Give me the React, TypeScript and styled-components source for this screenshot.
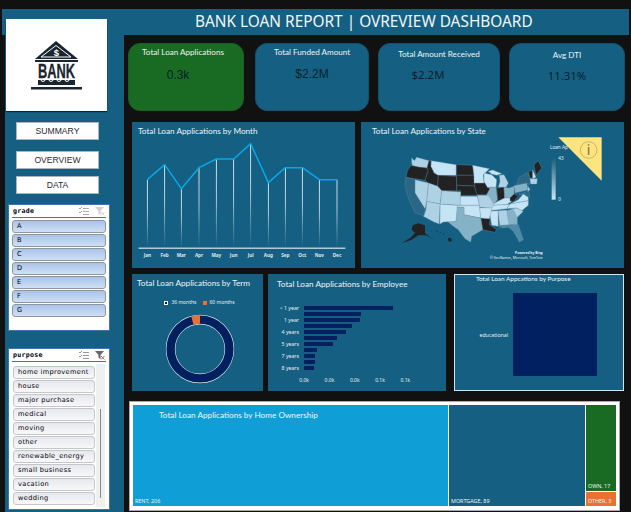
import React from "react";
import styled, { createGlobalStyle } from "styled-components";

const TEAL = "#156082";
const NAVY = "#002060";
const ORANGE = "#E97132";
const GREEN = "#196B24";
const SKY = "#0F9ED5";
const UI = '"Noto Sans", "Open Sans", sans-serif';
const TITLE = 'Lato, "Noto Sans", sans-serif';

const Global = createGlobalStyle`
  html, body { margin: 0; padding: 0; background: #111111; }
  * { box-sizing: border-box; }
`;

const Page = styled.div`
  width: 631px; height: 512px; background: #111111; padding-top: 9px;
  overflow: hidden; font-family: ${UI}; display: flex; flex-direction: column;
`;
const Header = styled.header`
  margin-left: 2px; width: 627px; height: 26px; flex: none; background: ${TEAL};
  color: #f2f6f8; font-size: 15.4px; line-height: 26px; padding-left: 193px; white-space: nowrap;
`;
const Body = styled.div`display: flex; flex: 1; min-height: 0;`;
const Sidebar = styled.aside`
  width: 119px; margin-left: 5px; background: ${TEAL}; display: flex; flex-direction: column; flex: none;
`;
const Logo = styled.div`
  position: relative; width: 101px; height: 92px; margin: -16px 0 0 1px; background: #fff;
  box-shadow: 0 1px 1px ${NAVY}; display: flex; align-items: center; justify-content: center;
`;
const LogoArt = styled.svg`overflow: visible; display: block;`;
const NavButton = styled.div<{ $top: number }>`
  width: 83px; height: 18px; margin: ${p => p.$top}px 0 0 11px; background: #fff; border: 1px solid #a9b4ba;
  color: #2b2b2b; font: 8.6px/16px "Liberation Sans", sans-serif; text-align: center;
`;
const Slicer = styled.section<{ $top: number; $h: number }>`
  width: 102px; height: ${p => p.$h}px; margin: ${p => p.$top}px 0 0 3px; background: #fff;
  border: 1px solid #3f75ad; padding: 0 3px;
`;
const SlicerHead = styled.div`
  height: 13px; border-bottom: 1px solid #4472a8; display: flex; align-items: center; justify-content: space-between;
  font: bold 6.6px "DejaVu Sans Mono", monospace; color: #000; letter-spacing: .3px; padding: 0 1px;
`;
const SlicerIcons = styled.div`display: flex; gap: 5px; align-items: center;`;
const ItemList = styled.div`display: flex; flex-direction: column; gap: 1px; margin-top: 2px;`;
const GradeItem = styled.div`
  height: 13px; border: 1px solid #8f959c; border-radius: 3px;
  background: linear-gradient(#a9c3e8, #cfe0f5); font: 6.6px/11px "DejaVu Sans", sans-serif; color: #000; padding-left: 4px;
`;
const PurposeBody = styled.div`display: flex; gap: 1px; margin-top: 2px; margin-left: 1px;`;
const PurposeItem = styled.div`
  height: 13px; width: 82px; border: 1px solid #c4c6c8; border-radius: 3px;
  background: linear-gradient(#e6e8ee, #f8f8fa); font: 6.6px/11px "DejaVu Sans", sans-serif; color: #000;
  padding-left: 4px; letter-spacing: .35px; white-space: nowrap; overflow: hidden;
`;
const ScrollTrack = styled.div`
  width: 9px; height: 143px; background: #f0f0f0; padding: 45px 0 0 4px;
`;
const ScrollThumb = styled.div`width: 1px; height: 89px; background: #8a8a8a;`;

const Main = styled.main`flex: 1; display: flex; flex-direction: column; min-width: 0;`;
const KpiRow = styled.div`display: flex; margin: 8px 0 0 4px; height: 68px; flex: none;`;
const Kpi = styled.div<{ $w: number; $ml: number; $green?: boolean; $pt: number }>`
  width: ${p => p.$w}px; margin-left: ${p => p.$ml}px; background: ${p => (p.$green ? GREEN : TEAL)};
  border-radius: 12px; border: 1px solid ${p => (p.$green ? "#175f22" : "#13506e")}; padding-top: ${p => p.$pt}px;
  display: flex; flex-direction: column; align-items: center;
`;
const KpiTitle = styled.div<{ $dx: number }>`
  font-family: ${TITLE}; font-size: 8.1px; line-height: 11px; color: #eef3f5; margin-right: ${p => p.$dx}px; white-space: nowrap;
`;
const KpiValue = styled.div<{ $dx: number; $mt: number; $plex?: boolean }>`
  font: ${p => (p.$plex ? `11.4px ${UI}` : '12px "Liberation Sans", sans-serif')}; line-height: 14px; color: #08202c;
  margin-top: ${p => p.$mt}px; margin-right: ${p => p.$dx}px;
`;
const ChartRow = styled.div<{ $top: number; $h: number }>`
  display: flex; margin: ${p => p.$top}px 0 0 8px; height: ${p => p.$h}px; flex: none;
`;
const Panel = styled.section<{ $w: number; $ml?: number; $framed?: boolean }>`
  position: relative; width: ${p => p.$w}px; margin-left: ${p => p.$ml ?? 0}px; background: ${TEAL}; overflow: hidden;
  border: ${p => (p.$framed ? "1px solid #d3e4ec" : "none")};
`;
const PanelTitle = styled.h3<{ $x: number; $y: number; $size?: number }>`
  position: relative; margin: ${p => p.$y}px 0 0 ${p => p.$x}px; font-family: ${TITLE}; font-weight: 400; font-size: ${p => p.$size ?? 8.2}px;
  line-height: 11px; color: #eef3f5; white-space: nowrap;
`;
const Overlay = styled.svg`position: absolute; left: 0; top: 0;`;
const TermLegend = styled.div`
  display: flex; gap: 6px; justify-content: center; margin-top: 10px; padding-left: 4px; font-size: 5px; line-height: 7px; color: #e6eef2;
`;
const LegendKey = styled.span`display: flex; align-items: center; gap: 3px;`;
const Swatch = styled.i<{ $c: string }>`
  width: 4px; height: 4px; background: ${p => p.$c}; border: ${p => (p.$c === NAVY ? "1px solid #fff" : "none")}; display: block;
`;
const DonutWrap = styled.div`display: flex; justify-content: center; margin-top: 8px; padding-left: 4px;`;
const Bars = styled.div`display: flex; flex-direction: column; margin-top: 15px;`;
const BarRow = styled.div`display: flex; align-items: center; height: 6.05px;`;
const BarLabel = styled.span`
  width: 31px; margin-right: 5px; text-align: right; font-size: 5.2px; line-height: 6px; color: #e6eef2; white-space: nowrap;
`;
const Bar = styled.i`display: block; height: 4px; background: ${NAVY};`;
const Axis = styled.div`display: flex; margin: 5px 0 0 23.5px; width: 140px;`;
const AxisTick = styled.span`width: 25.3px; text-align: center; font-size: 5px; line-height: 7px; color: #e6eef2;`;
const PurposeChart = styled.div`display: flex; align-items: center; margin-top: 9px;`;
const PurposeLabel = styled.span`
  width: 53px; text-align: right; margin-right: 5px; font-size: 5.2px; color: #e6eef2;
`;
const PurposeBlock = styled.div`width: 84px; height: 83px; background: ${NAVY};`;

const Tree = styled.div`
  display: flex; gap: 1px; margin: 10px 0 0 5px; width: 491px; height: 110px; flex: none; background: #fff;
  border: 1px solid #a9a9a9; padding: 3px 3px 4px 3px;
`;
const Cell = styled.div<{ $c: string; $w?: number; $h?: number }>`
  position: relative; background: ${p => p.$c}; ${p => (p.$w ? `width: ${p.$w}px;` : "")}
  ${p => (p.$h ? `height: ${p.$h}px; flex: none;` : p.$w ? "" : "flex: 1;")}
  display: flex; flex-direction: column; justify-content: flex-end; min-width: 0;
`;
const CellStack = styled.div`width: 30px; display: flex; flex-direction: column; gap: 1px; flex: none;`;
const CellLabel = styled.span`font-size: 5.4px; line-height: 7px; color: #eef3f5; padding: 0 0 1.5px 2px; white-space: nowrap;`;
const TreeTitle = styled.h3`
  position: absolute; left: 26px; top: 5px; margin: 0; font-family: ${TITLE}; font-weight: 400; font-size: 8.2px; line-height: 11px; color: #eef6fa; white-space: nowrap;
`;

const ICON = "#1b2530";
const BankLogo = () => (
  <LogoArt width="51" height="50" viewBox="0 0 51 50">
    <path d="M25 1 L47 19 H4 Z" fill={ICON} />
    <path d="M25 5.5 L40 17 H10 Z" fill="none" stroke="#fff" strokeWidth="1" />
    <text x="25.5" y="15.5" textAnchor="middle" fill="#fff" fontFamily="Liberation Sans" fontWeight="700" fontSize="9.5">$</text>
    <rect x="4" y="20" width="43" height="2" fill={ICON} />
    <text x="7" y="38" fill={ICON} stroke={ICON} strokeWidth=".3" fontFamily="Liberation Sans" fontWeight="700" fontSize="20" textLength="37" lengthAdjust="spacingAndGlyphs">BANK</text>
    <path d="M7 40 H44 V45 H7 Z" fill={ICON} />
    <path d="M10 40 q2 3 4 0 M18 40 q2 3 4 0 M26 40 q2 3 4 0 M34 40 q2 3 4 0" stroke="#fff" fill="none" strokeWidth="1.2" />
    <rect x="0" y="47" width="51" height="2.5" fill={ICON} />
  </LogoArt>
);

const SelectIcon = ({ c }: { c: string }) => (
  <svg width="11" height="9" viewBox="0 0 11 9">
    <path d="M0 1 l1 1 2-2 M0 5 l1 1 2-2" stroke={c} fill="none" />
    <path d="M4 1.5 H10 M4 4.5 H10 M4 7.5 H10" stroke={c} />
  </svg>
);
const ClearIcon = ({ active }: { active?: boolean }) => (
  <svg width="10" height="9" viewBox="0 0 10 9">
    <path d="M0 0 H9 L5.5 4 V8 L3.5 7 V4 Z" fill={active ? "#666" : "#d0d0d0"} />
    <path d="M6 5 L9.5 8.5 M9.5 5 L6 8.5" stroke={active ? "#d9534f" : "#e0c8c8"} />
  </svg>
);

const months = ["Jan", "Feb", "Mar", "Apr", "May", "Jun", "Jul", "Aug", "Sep", "Oct", "Nov", "Dec"];
const linePts: [number, number][] = [[58, 185], [110, 140], [160, 212], [213, 149], [265, 123], [317, 123], [368, 77], [421, 194], [472, 149], [523, 149], [574, 185], [627, 185]];

const MonthChart = () => (
  <Overlay width="223" height="145" viewBox="12 12 669 435">
    <defs>
      <linearGradient id="drop" x1="0" y1="0" x2="0" y2="1">
        <stop offset="0" stopColor="#fff" />
        <stop offset=".45" stopColor="#fff" stopOpacity=".85" />
        <stop offset="1" stopColor="#fff" stopOpacity="0" />
      </linearGradient>
    </defs>
    {linePts.map(([x, y]) => (
      <rect key={x} x={x - 1.2} y={y} width="2.4" height={388 - y} fill="url(#drop)" />
    ))}
    <polyline points={linePts.map(p => p.join(",")).join(" ")} fill="none" stroke="#0aa5e8" strokeWidth="4.5" strokeLinejoin="round" />
    <rect x="32" y="389" width="620" height="3" fill="#fff" />
    {months.map((m, i) => (
      <text key={m} x={linePts[i][0]} y="416" textAnchor="middle" fontSize="14" fontWeight="700" fontFamily="Noto Sans" fill="#dfe8ee">{m}</text>
    ))}
  </Overlay>
);

const L = "#c5e4f5", M1 = "#aed2e4", M2 = "#86b2c8", D1 = "#4d8ba9", D2 = "#2a6686", B = "#222222";
const states: [string, string][] = [
  ["155,120 163,128 170,118 207,128 201,150 175,147 158,143 155,135", M1],
  ["158,143 175,147 201,150 205,158 195,187 138,178 142,160 150,145", B],
  ["207,128 214,128 213,145 223,165 235,172 233,205 205,195 195,187 205,158 201,150", B],
  ["214,128 288,140 288,172 235,172 223,165 213,145", L],
  ["235,172 290,175 290,218 245,218 233,205", B],
  ["290,140 338,142 342,172 290,172", B],
  ["290,172 342,172 344,204 290,202", B],
  ["290,202 344,204 352,232 302,232 302,218 290,218", B],
  ["342,195 385,195 390,212 380,230 350,230 344,204", B],
  ["338,142 388,152 370,170 372,195 342,195 342,172", L],
  ["372,165 395,170 410,185 408,208 382,208 372,190", L],
  ["418,172 432,170 445,195 438,208 415,208 420,190", M1],
  ["385,160 398,156 426,167 410,172 395,168", L],
  ["382,208 408,208 412,245 402,258 385,238 380,230 390,212", M2],
  ["410,210 432,208 434,240 414,250", B],
  ["432,208 448,210 462,205 462,228 450,240 434,240", M2],
  ["392,262 414,250 434,240 450,240 455,250 440,260", L],
  ["462,228 470,232 480,225 470,240 460,252 450,248 450,240", B],
  ["462,203 500,195 505,215 465,225", M2],
  ["470,200 478,178 505,162 512,192 508,200 500,195", D2],
  ["505,160 518,158 518,180 510,180", B],
  ["518,155 528,178 518,182", L],
  ["522,140 535,128 545,150 528,172", B],
  ["510,182 532,182 530,198 512,198", M1],
  ["505,205 510,215 503,222", M1],
  ["478,230 505,218 510,236 497,228", D2],
  ["450,258 475,245 490,228 505,238 505,248", L],
  ["440,272 450,258 505,248 505,262 485,278 470,270", L],
  ["392,262 440,260 450,258 440,272 390,278", L],
  ["455,272 470,270 490,280 470,300", M1],
  ["440,278 458,272 472,300 472,320 445,320", M2],
  ["420,322 475,320 490,365 478,372 460,340 445,328 425,330", D1],
  ["414,278 440,276 447,320 420,322 420,330", M1],
  ["388,280 414,278 415,325 395,322", L],
  ["362,300 390,302 388,320 410,335 405,343 368,335", B],
  ["358,270 396,268 388,302 362,300", L],
  ["352,232 385,232 402,258 395,270 358,268", M1],
  ["300,235 352,235 358,262 300,262", L],
  ["290,262 358,262 362,300 335,295 312,290 312,268 290,268", L],
  ["290,268 312,268 312,290 335,295 362,300 368,335 335,355 332,372 315,362 295,335 280,325 262,310 288,310", M2],
  ["240,258 292,262 288,310 250,312 240,318", L],
  ["245,218 302,222 300,262 240,258", M1],
  ["205,195 233,205 245,218 240,258 200,250", M1],
  ["200,250 240,258 238,318 222,312 190,295 198,275", M1],
  ["165,185 205,195 200,250 195,275 165,225", M1],
  ["138,178 165,185 165,225 195,272 192,293 165,285 145,240 135,205", D2],
];

const StateMap = () => (
  <Overlay width="263" height="146" viewBox="3 12 789 438">
    <defs>
      <linearGradient id="scale" x1="0" y1="0" x2="0" y2="1">
        <stop offset="0" stopColor="#1d5a78" />
        <stop offset="1" stopColor="#c9e6f6" />
      </linearGradient>
    </defs>
    {states.map(([pts, c], i) => (
      <polygon key={i} points={pts} fill={c} stroke="#6f93a8" strokeWidth="1" strokeLinejoin="round" />
    ))}
    <path d="M158 322 L175 316 L195 322 L195 345 L220 365 L200 352 L175 352 L155 365 L125 376 L150 360 L165 345 L155 335 Z" fill={B} />
    <path d="M228 338 l5 1 -2 3 Z M238 342 l4 1 -1 3 Z M248 346 l5 2 -2 3 Z M265 359 l8 2 3 7 -6 4 -6 -5 Z" fill={B} />
    <text x="548" y="407" textAnchor="end" fontSize="10" fontWeight="700" fontFamily="Noto Sans" fill="#e8f0f4">Powered by Bing</text>
    <text x="548" y="423" textAnchor="end" fontSize="10" fontFamily="Noto Sans" fill="#e8f0f4">© GeoNames, Microsoft, TomTom</text>
    <text x="570" y="94" fontSize="14" fontFamily="Noto Sans" fill="#e8f0f4">Loan Ap</text>
    <rect x="575" y="118" width="12" height="127" fill="url(#scale)" />
    <text x="595" y="125" fontSize="14" fontFamily="Noto Sans" fill="#e8f0f4">43</text>
    <text x="595" y="250" fontSize="14" fontFamily="Noto Sans" fill="#e8f0f4">0</text>
    <polygon points="595,58 725,58 725,188" fill="#fde47f" />
    <circle cx="686" cy="96" r="25" fill="none" stroke="#bda968" strokeWidth="2.5" />
    <text x="686" y="112" textAnchor="middle" fontSize="42" fontFamily="Noto Sans" fill="#7d6e3a">i</text>
  </Overlay>
);

const Donut = () => {
  const r = 29.4;
  const c = 2 * Math.PI * r;
  return (
    <svg width="70" height="70" viewBox="0 0 70 70">
      <circle cx="35" cy="35" r={r} fill="none" stroke="#dfe7ec" strokeWidth="9.6" />
      <circle cx="35" cy="35" r={r} fill="none" stroke={NAVY} strokeWidth="8.4" />
      <circle cx="35" cy="35" r={r} fill="none" stroke={ORANGE} strokeWidth="8.4"
        strokeDasharray={`${c * 0.042} ${c}`} transform="rotate(-105 35 35)" />
    </svg>
  );
};

const grades = ["A", "B", "C", "D", "E", "F", "G"];
const purposes = ["home improvement", "house", "major purchase", "medical", "moving", "other", "renewable_energy", "small business", "vacation", "wedding"];
const barRows: [string, number][] = [["< 1 year", 89], ["", 57], ["1 year", 56], ["", 48], ["4 years", 42], ["", 33], ["5 years", 29], ["", 13], ["7 years", 11], ["", 11], ["8 years", 10]];

export default function App() {
  return (
    <Page>
      <Global />
      <Header>BANK LOAN REPORT | OVREVIEW DASHBOARD</Header>
      <Body>
        <Sidebar>
          <Logo><BankLogo /></Logo>
          <NavButton $top={11}>SUMMARY</NavButton>
          <NavButton $top={11}>OVERVIEW</NavButton>
          <NavButton $top={7}>DATA</NavButton>
          <Slicer $top={10} $h={127}>
            <SlicerHead>
              grade
              <SlicerIcons><SelectIcon c="#aaa" /><ClearIcon /></SlicerIcons>
            </SlicerHead>
            <ItemList>
              {grades.map(g => <GradeItem key={g}>{g}</GradeItem>)}
            </ItemList>
          </Slicer>
          <Slicer $top={17} $h={162}>
            <SlicerHead>
              purpose
              <SlicerIcons><SelectIcon c="#999" /><ClearIcon active /></SlicerIcons>
            </SlicerHead>
            <PurposeBody>
              <ItemList>
                {purposes.map(g => <PurposeItem key={g}>{g}</PurposeItem>)}
              </ItemList>
              <ScrollTrack><ScrollThumb /></ScrollTrack>
            </PurposeBody>
          </Slicer>
        </Sidebar>
        <Main>
          <KpiRow>
            <Kpi $w={116} $ml={0} $green $pt={3}>
              <KpiTitle $dx={6}>Total Loan Applications</KpiTitle>
              <KpiValue $dx={16} $mt={10}>0.3k</KpiValue>
            </Kpi>
            <Kpi $w={114} $ml={11} $pt={3}>
              <KpiTitle $dx={0}>Total Funded Amount</KpiTitle>
              <KpiValue $dx={0} $mt={9}>$2.2M</KpiValue>
            </Kpi>
            <Kpi $w={122} $ml={9} $pt={5}>
              <KpiTitle $dx={0}>Total Amount Received</KpiTitle>
              <KpiValue $dx={22} $mt={8} $plex>$2.2M</KpiValue>
            </Kpi>
            <Kpi $w={116} $ml={9} $pt={6}>
              <KpiTitle $dx={0}>Avg DTI</KpiTitle>
              <KpiValue $dx={0} $mt={8} $plex>11.31%</KpiValue>
            </Kpi>
          </KpiRow>
          <ChartRow $top={11} $h={146}>
            <Panel $w={223}>
              <MonthChart />
              <PanelTitle $x={6} $y={4}>Total Loan Applications by Month</PanelTitle>
            </Panel>
            <Panel $w={263} $ml={6}>
              <StateMap />
              <PanelTitle $x={11} $y={4}>Total Loan Applications by State</PanelTitle>
            </Panel>
          </ChartRow>
          <ChartRow $top={6} $h={117}>
            <Panel $w={131}>
              <PanelTitle $x={5} $y={4}>Total Loan Applications by Term</PanelTitle>
              <TermLegend>
                <LegendKey><Swatch $c={NAVY} />36 months</LegendKey>
                <LegendKey><Swatch $c={ORANGE} />60 months</LegendKey>
              </TermLegend>
              <DonutWrap><Donut /></DonutWrap>
            </Panel>
            <Panel $w={178} $ml={5}>
              <PanelTitle $x={9} $y={5}>Total Loan Applications by Employee</PanelTitle>
              <Bars>
                {barRows.map(([l, w], i) => (
                  <BarRow key={i}>
                    <BarLabel>{l}</BarLabel>
                    <Bar style={{ width: w }} />
                  </BarRow>
                ))}
              </Bars>
              <Axis>
                {["0.0k", "0.0k", "0.0k", "0.1k", "0.1k"].map((t, i) => <AxisTick key={i}>{t}</AxisTick>)}
              </Axis>
            </Panel>
            <Panel $w={170} $ml={8} $framed>
              <PanelTitle $x={21} $y={-2} $size={6.4}>Total Loan Appcations by Purpose</PanelTitle>
              <PurposeChart>
                <PurposeLabel>educational</PurposeLabel>
                <PurposeBlock />
              </PurposeChart>
            </Panel>
          </ChartRow>
          <Tree>
            <Cell $c={SKY} $w={315}>
              <TreeTitle>Total Loan Applications by Home Ownership</TreeTitle>
              <CellLabel>RENT, 206</CellLabel>
            </Cell>
            <Cell $c={TEAL} $w={136}><CellLabel>MORTGAGE, 89</CellLabel></Cell>
            <CellStack>
              <Cell $c={GREEN}><CellLabel>OWN, 17</CellLabel></Cell>
              <Cell $c={ORANGE} $h={14}><CellLabel>OTHER, 3</CellLabel></Cell>
            </CellStack>
          </Tree>
        </Main>
      </Body>
    </Page>
  );
}
